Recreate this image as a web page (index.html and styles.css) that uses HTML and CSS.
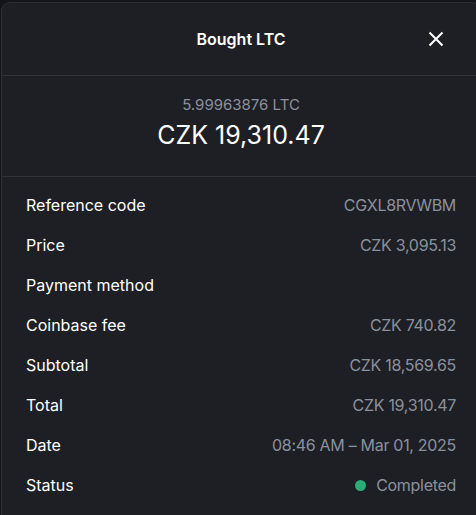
FILE: index.html
```html
<!DOCTYPE html>
<html lang="en">

<head>
    <meta charset="UTF-8">
    <meta name="viewport" content="width=device-width, initial-scale=1.0">
    <title>Bought LTC</title>
    <link rel="stylesheet" href="styles.css">
</head>

<body>
    <div class="modal">
        <header class="modal-header">
            <h1 class="title">Bought LTC</h1>
            <button class="close" aria-label="Close">
                <svg width="16" height="16" viewBox="0 0 16 16">
                    <path d="M1.5 1.5 L14.5 14.5 M14.5 1.5 L1.5 14.5" stroke="#fff" stroke-width="2" fill="none"/>
                </svg>
            </button>
        </header>

        <section class="amount">
            <div class="crypto">5.99963876 LTC</div>
            <div class="fiat">CZK 19,310.47</div>
        </section>

        <dl class="details">
            <div class="row">
                <dt>Reference code</dt>
                <dd>CGXL8RVWBM</dd>
            </div>
            <div class="row">
                <dt>Price</dt>
                <dd>CZK 3,095.13</dd>
            </div>
            <div class="row">
                <dt>Payment method</dt>
                <dd class="hidden-value"></dd>
            </div>
            <div class="row">
                <dt>Coinbase fee</dt>
                <dd>CZK 740.82</dd>
            </div>
            <div class="row">
                <dt>Subtotal</dt>
                <dd>CZK 18,569.65</dd>
            </div>
            <div class="row">
                <dt>Total</dt>
                <dd>CZK 19,310.47</dd>
            </div>
            <div class="row">
                <dt>Date</dt>
                <dd>08:46 AM – Mar 01, 2025</dd>
            </div>
            <div class="row">
                <dt>Status</dt>
                <dd><span class="dot"></span>Completed</dd>
            </div>
        </dl>
    </div>
</body>

</html>
```

FILE: styles.css
```css
body {
    margin: 0;
    padding: 2px 0 0 1px;
    background-color: #141519;
    overflow: hidden;
    font-family: Inter, "Noto Sans", sans-serif;
}

.modal {
    width: 480px;
    height: 513px;
    box-sizing: border-box;
    background-color: #1e1f24;
    border: 1px solid #2e2f35;
    border-bottom: none;
    border-radius: 9px 9px 0 0;
}

.modal-header {
    height: 72px;
    display: flex;
    align-items: center;
    justify-content: center;
    position: relative;
    border-bottom: 1px solid #33343a;
}

.title {
    margin: 0;
    color: #ffffff;
    font-size: 16px;
    font-weight: 600;
}

.close {
    position: absolute;
    right: 36px;
    top: 28px;
    padding: 0;
    border: none;
    background: none;
    line-height: 0;
}

.amount {
    height: 101px;
    box-sizing: border-box;
    padding-top: 19px;
    text-align: center;
    border-bottom: 1px solid #33343a;
}

.crypto {
    color: #8a919e;
    font-size: 15px;
    line-height: 20px;
}

.fiat {
    color: #ffffff;
    font-size: 25px;
    line-height: 40px;
}

.details {
    margin: 0;
    padding: 8px 24px 0 24px;
}

.row {
    display: flex;
    justify-content: space-between;
    align-items: center;
    height: 40px;
}

dt {
    color: #ffffff;
    font-size: 16px;
}

dd {
    margin: 0;
    color: #8a919e;
    font-size: 16px;
    letter-spacing: -0.3px;
    display: flex;
    align-items: center;
}

.dot {
    width: 11px;
    height: 11px;
    border-radius: 50%;
    background-color: #27ad75;
    margin-right: 10px;
}
```
